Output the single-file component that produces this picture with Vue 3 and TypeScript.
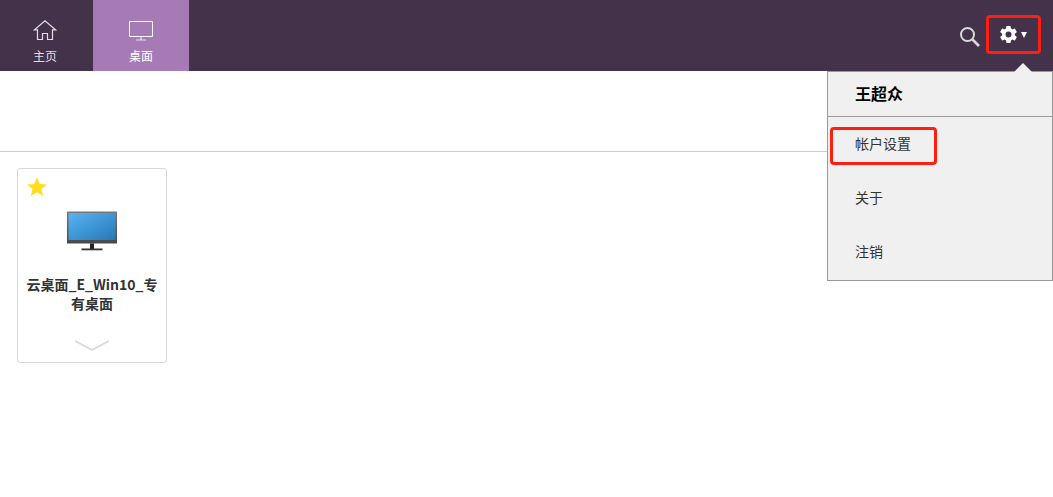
<script setup lang="ts">
import { ref } from 'vue'

interface MenuItem {
  label: string
  highlighted: boolean
}

const menuOpen = ref(true)
const user = '王超众'
const desktop = '云桌面_E_Win10_专有桌面'
const items: MenuItem[] = [
  { label: '帐户设置', highlighted: true },
  { label: '关于', highlighted: false },
  { label: '注销', highlighted: false },
]
</script>

<template>
  <div class="page">
    <header class="header">
      <nav class="nav">
        <a class="tab home" href="#home">
          <svg width="24" height="22" viewBox="0 0 24 22" fill="none" stroke="currentColor" stroke-width="1.2" aria-hidden="true">
            <path d="M1.500 9.800H4.500V19.500H9.500V13.500H14.500V19.500H19.500V9.800H22.500L12 .8Z" />
          </svg>
          <span>主页</span>
        </a>
        <a class="tab active" href="#desktops" aria-current="page">
          <svg width="24" height="22" viewBox="0 0 24 22" fill="none" stroke="currentColor" aria-hidden="true">
            <path d="M.5 1.500H23.500V16.500H.5ZM12 17V20" />
            <path d="M7 20H17" stroke-opacity=".75" />
          </svg>
          <span>桌面</span>
        </a>
      </nav>
      <div class="actions">
        <button class="search" type="button" aria-label="搜索">
          <svg width="22" height="22" viewBox="0 0 22 22" fill="none" stroke="currentColor" aria-hidden="true">
            <circle cx="8.500" cy="8.500" r="6.500" stroke-width="2" />
            <path d="M13 13 20 20" stroke-width="2.600" />
          </svg>
        </button>
        <div class="account">
          <button class="settings marked" type="button" aria-label="设置" :aria-expanded="menuOpen" @click="menuOpen = !menuOpen">
            <svg width="17" height="17" viewBox="2 2 20 20" fill="currentColor" aria-hidden="true">
              <path d="M19.430 12.980c.04-.32.07-.64.07-.98s-.03-.66-.07-.98l2.110-1.650c.19-.15.24-.42.12-.64l-2-3.460c-.12-.22-.39-.3-.61-.22l-2.490 1c-.52-.4-1.080-.73-1.690-.98l-.38-2.650A.488.488 0 0 0 14 2h-4c-.25 0-.46.18-.49.42l-.38 2.650c-.61.25-1.170.59-1.690.98l-2.490-1c-.23-.09-.49 0-.61.22l-2 3.460c-.13.22-.07.49.12.64l2.110 1.650c-.04.32-.07.65-.07.98s.03.66.07.98l-2.110 1.650c-.19.15-.24.42-.12.64l2 3.460c.12.22.39.3.61.22l2.490-1c.52.4 1.080.73 1.690.98l.38 2.650c.03.24.24.42.49.42h4c.25 0 .46-.18.49-.42l.38-2.650c.61-.25 1.170-.59 1.690-.98l2.490 1c.23.09.49 0 .61-.22l2-3.460c.12-.22.07-.49-.12-.64zM12 15.500a3.500 3.500 0 1 1 0-7 3.500 3.500 0 0 1 0 7z" />
            </svg>
            <svg width="6" height="6" viewBox="0 0 6 6" fill="currentColor" aria-hidden="true"><path d="M0 0H6L3 6Z" /></svg>
          </button>
          <div v-if="menuOpen" class="menu">
            <svg class="pointer" width="18" height="9" viewBox="0 0 18 9" aria-hidden="true"><path d="M0 9 9 0 18 9Z" fill="#f0f0f0" /></svg>
            <h2 class="user">{{ user }}</h2>
            <ul class="list">
              <li v-for="item in items" :key="item.label">
                <button class="item" :class="{ marked: item.highlighted }" type="button">{{ item.label }}</button>
              </li>
            </ul>
          </div>
        </div>
      </div>
    </header>
    <div class="toolbar"></div>
    <main class="content">
      <article class="card">
        <svg class="star" width="20" height="20" viewBox="0 0 20 20" aria-hidden="true">
          <path d="M10 .3 12.800 7 20 7.500 14.500 12.100 16.200 19 10 15.300 3.800 19 5.500 12.100 0 7.500 7.200 7Z" fill="#ffde23" />
        </svg>
        <svg class="monitor" width="52" height="42" viewBox="0 0 52 42" aria-hidden="true">
          <defs>
            <linearGradient id="screen" x1="0" y1="0" x2="1" y2="1">
              <stop offset="0" stop-color="#5bb3f5" />
              <stop offset=".5" stop-color="#3e96d6" />
              <stop offset="1" stop-color="#2878b2" />
            </linearGradient>
            <linearGradient id="frame" x1="0" y1="0" x2="0" y2="1">
              <stop offset="0" stop-color="#777" />
              <stop offset="1" stop-color="#484848" />
            </linearGradient>
          </defs>
          <rect x="1" y="1.500" width="50" height="32" rx=".5" fill="url(#frame)" />
          <rect x="2.500" y="3" width="47" height="27" fill="url(#screen)" />
          <path d="M24 33.500H28V39H24Z" fill="#222" />
          <path d="M15.500 38.500H36.500V40.300H15.500Z" fill="#333" />
        </svg>
        <h3 class="title">{{ desktop }}</h3>
        <button class="expand" type="button" aria-label="展开">
          <svg width="36" height="14" viewBox="0 0 36 14" fill="none" stroke="#d9d9d9" stroke-width="1.800" aria-hidden="true"><path d="M1 2 18 11 35 2" /></svg>
        </button>
      </article>
    </main>
  </div>
</template>

<style>
body {
  margin: 0;
  background: #fff;
}
</style>

<style scoped>
.page {
  min-height: 100vh;
  color: #333;
  font: 14px/20px "Noto Sans", "Noto Sans CJK SC", sans-serif;
}
button {
  box-sizing: border-box;
  margin: 0;
  padding: 0;
  border: 0;
  background: none;
  color: inherit;
  font: inherit;
  cursor: pointer;
}
svg {
  display: block;
  flex: none;
}
.header {
  display: flex;
  justify-content: space-between;
  height: 71px;
  background: #44324b;
}
.nav {
  display: flex;
}
.tab {
  box-sizing: border-box;
  display: flex;
  flex-direction: column;
  align-items: center;
  gap: 6px;
  width: 96px;
  padding-top: 20px;
  color: #fff;
  font-size: 12px;
  line-height: 18px;
  text-decoration: none;
}
.home {
  width: 93px;
  padding-right: 3px;
  color: #e0dce2;
}
.active {
  background: #a67ab5;
}
.actions {
  display: flex;
  align-items: flex-start;
  gap: 5px;
}
.search {
  margin-top: 26px;
  color: #dad6db;
}
.account {
  position: relative;
  padding: 15px 12px 0 0;
}
.settings {
  display: flex;
  align-items: center;
  justify-content: center;
  gap: 4px;
  width: 55px;
  height: 39px;
  color: #fff;
}
.marked {
  border: 3px solid #ff1e12;
  border-radius: 4px;
}
.menu {
  box-sizing: border-box;
  position: absolute;
  top: 71px;
  right: 0;
  z-index: 1;
  width: 226px;
  padding-bottom: 1px;
  border: 1px solid #999;
  background: #f0f0f0;
}
.pointer {
  position: absolute;
  top: -9px;
  right: 20px;
}
.user {
  margin: 0;
  padding-left: 27px;
  border-bottom: 1px solid #999;
  color: #000;
  font-size: 16px;
  font-weight: 700;
  line-height: 44px;
}
.list {
  margin: 0;
  padding: 0;
  list-style: none;
}
.list li {
  box-sizing: border-box;
  display: flex;
  align-items: center;
  height: 54px;
  padding: 4px 0 0 2px;
}
.item {
  height: 38px;
  padding: 0 25px 4px;
}
.item.marked {
  padding: 0 23px 4px 22px;
}
.toolbar {
  height: 80px;
  border-bottom: 1px solid #ccc;
}
.content {
  padding: 16px 17px;
}
.card {
  box-sizing: border-box;
  position: relative;
  display: flex;
  flex-direction: column;
  align-items: center;
  width: 150px;
  padding: 41px 8px 9px;
  border: 1px solid #d9d9d9;
  border-radius: 3px;
}
.star {
  position: absolute;
  top: 8px;
  left: 9px;
}
.title {
  margin: 23px 0 26px;
  font-family: "Noto Sans CJK SC", sans-serif;
  font-size: 14px;
  font-weight: 700;
  line-height: 19px;
  text-align: center;
  word-break: break-all;
}
</style>
